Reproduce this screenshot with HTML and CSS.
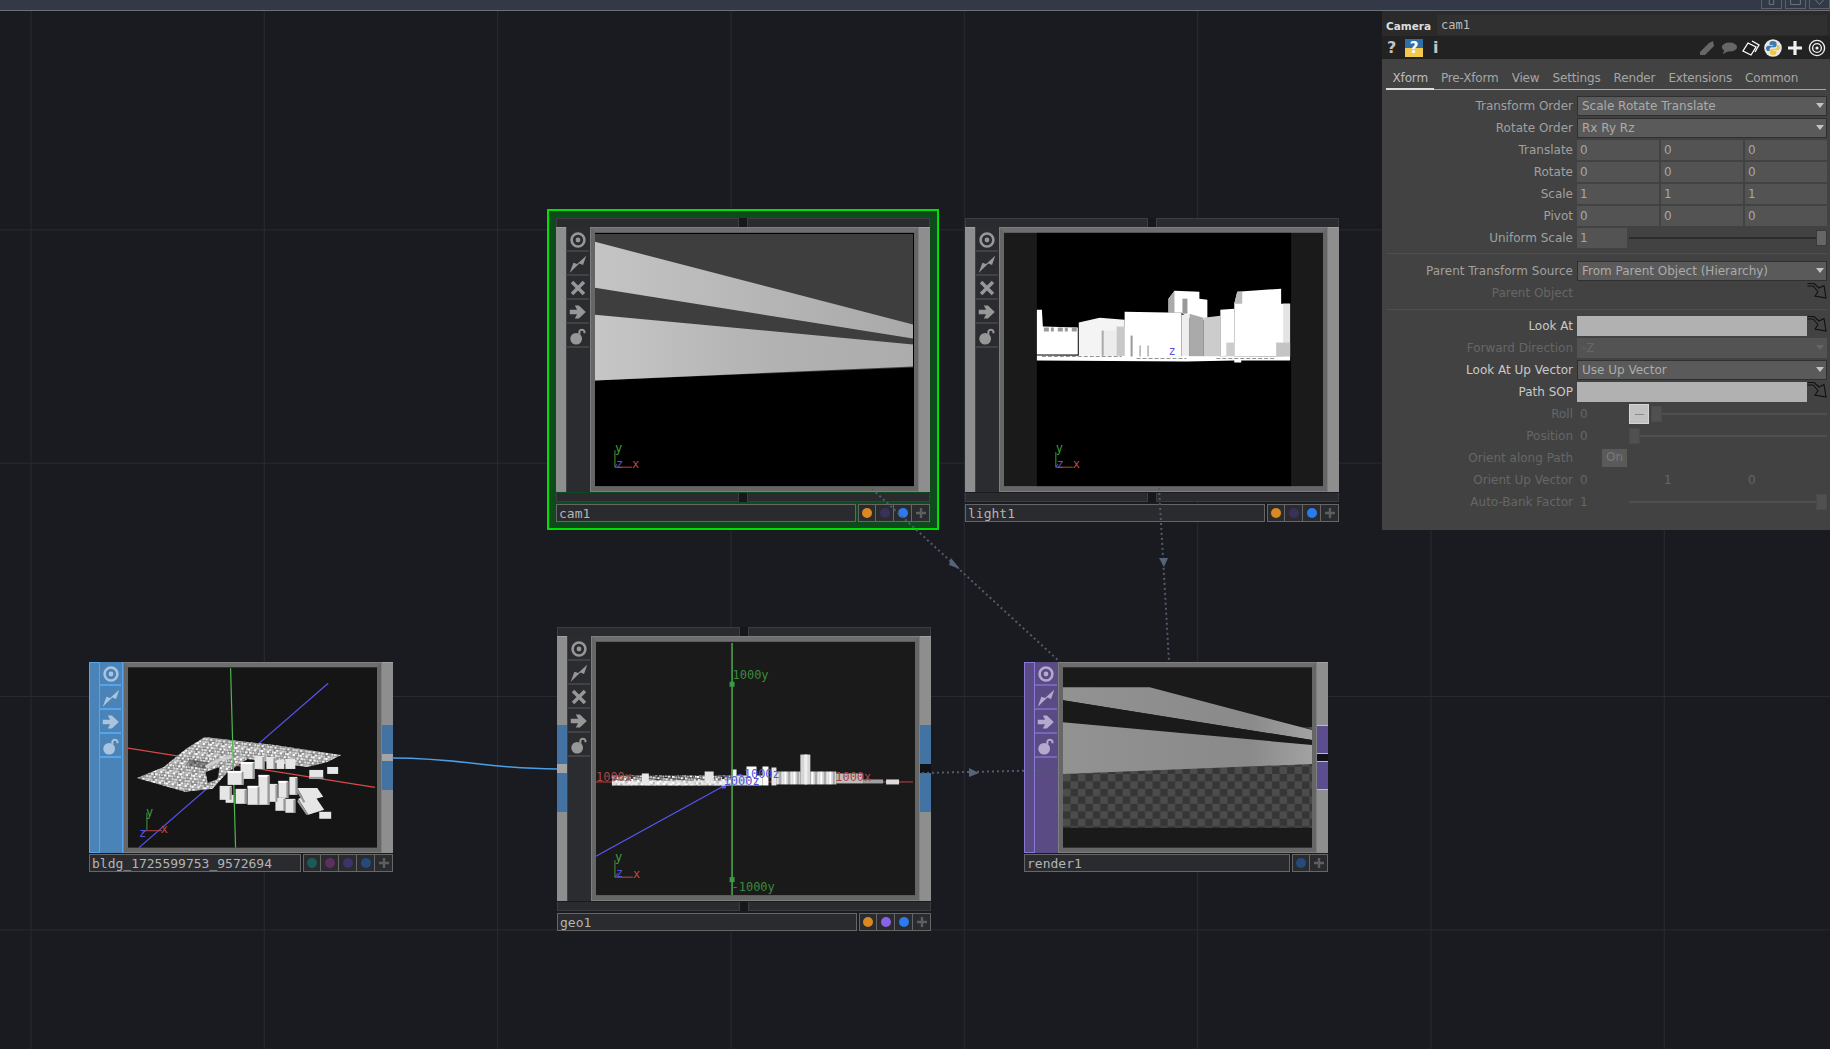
FILE: index.html
```html
<!DOCTYPE html>
<html>
<head>
<title>cam1</title>
<meta charset="utf-8" />
<link rel="stylesheet" href="styles.css">
</head>
<body>

<svg class="defs" width="0" height="0">
  <symbol id="i-target" viewBox="0 0 24 24"><circle cx="12" cy="12" r="7" fill="none" stroke="currentColor" stroke-width="2.8"/><circle cx="12" cy="12" r="2.6" fill="currentColor"/></symbol>
  <symbol id="i-bolt" viewBox="0 0 24 24"><path d="M21 3 L17.5 13 L13.5 11.5 L3 21.5 L7 10.5 L11 12 Z" fill="currentColor"/></symbol>
  <symbol id="i-x" viewBox="0 0 24 24"><path d="M5.5 5.5 L18.5 18.5 M18.5 5.5 L5.5 18.5" fill="none" stroke="currentColor" stroke-width="3.8"/></symbol>
  <symbol id="i-arrow" viewBox="0 0 24 24"><path d="M3 9.5 H11 L8.5 5 H13 L20.5 12 L13 19 H8.5 L11 14.5 H3 Z" fill="currentColor"/></symbol>
  <symbol id="i-lock" viewBox="0 0 24 24"><circle cx="10" cy="15" r="6.4" fill="currentColor"/><path d="M13.5 10 V7 A3 3 0 0 1 19 7 V9" fill="none" stroke="currentColor" stroke-width="2.2"/></symbol>
  <symbol id="i-plus" viewBox="0 0 12 12"><path d="M6 1 V11 M1 6 H11" stroke="currentColor" stroke-width="2.4"/></symbol>
  <symbol id="i-op" viewBox="0 0 20 16"><path d="M0.5 0.5 H7 L12 5 L17 2.5 L19 15 L8 13 L11 8.5 L6 3 H0.5" fill="none" stroke="#111" stroke-width="1.1"/></symbol>
  <pattern id="speck" width="13" height="11" patternUnits="userSpaceOnUse" patternTransform="rotate(7)">
    <rect x="0" y="0" width="2.4" height="2.4" fill="#fff"/><rect x="3" y="0.5" width="1.8" height="2" fill="#ccc"/><rect x="5.5" y="0" width="2.8" height="2.4" fill="#fff"/><rect x="9" y="0.6" width="1.6" height="1.8" fill="#aaa"/><rect x="11" y="0" width="1.8" height="2.4" fill="#eee"/>
    <rect x="1" y="3" width="2.8" height="2.4" fill="#eee"/><rect x="4.5" y="3.4" width="1.8" height="2" fill="#fff"/><rect x="7" y="3" width="2.4" height="2" fill="#bbb"/><rect x="10" y="3.2" width="2.6" height="2.2" fill="#fff"/>
    <rect x="0" y="6" width="1.8" height="2.2" fill="#fff"/><rect x="2.5" y="6.4" width="2.4" height="2" fill="#aaa"/><rect x="5.4" y="6" width="2" height="2.4" fill="#eee"/><rect x="8" y="6" width="2.8" height="2.4" fill="#ddd"/><rect x="11.4" y="6.4" width="1.4" height="1.8" fill="#bbb"/>
    <rect x="1.6" y="9" width="2.8" height="1.8" fill="#fff"/><rect x="5" y="9" width="1.8" height="1.8" fill="#ccc"/><rect x="7.4" y="9.2" width="2.4" height="1.6" fill="#fff"/><rect x="10.4" y="9" width="1.8" height="1.8" fill="#ddd"/>
  </pattern>
  <pattern id="cols" width="9" height="10" patternUnits="userSpaceOnUse">
    <rect width="9" height="10" fill="#cfcfcf"/>
    <rect width="2" height="10" fill="#fff"/><rect x="4" width="1.5" height="10" fill="#9a9a9a"/><rect x="6.5" width="1.5" height="10" fill="#efefef"/>
  </pattern>
  <pattern id="checker" width="15" height="15" patternUnits="userSpaceOnUse" y="2">
    <rect width="15" height="15" fill="#363636"/>
    <rect width="7.5" height="7.5" fill="#4c4c4c"/>
    <rect x="7.5" y="7.5" width="7.5" height="7.5" fill="#4c4c4c"/>
  </pattern>
  <linearGradient id="wall-a" x1="0" x2="1" y1="0" y2="0"><stop offset="0" stop-color="#c4c4c4"/><stop offset="1" stop-color="#a9a9a9"/></linearGradient>
  <linearGradient id="wall-b" x1="0" x2="1" y1="0" y2="0"><stop offset="0" stop-color="#c6c6c6"/><stop offset="0.55" stop-color="#b2b2b2"/><stop offset="1" stop-color="#acacac"/></linearGradient>
  <linearGradient id="wall-c" x1="0" x2="1" y1="0" y2="0"><stop offset="0" stop-color="#929292"/><stop offset="0.75" stop-color="#8a8a8a"/><stop offset="1" stop-color="#a2a2a2"/></linearGradient>
</svg>

<div class="topbar">
  <span class="winbtn"><svg viewBox="0 0 21 9"><path d="M8 0 V5 H13 V0" fill="none" stroke="#777d88"/></svg></span>
  <span class="winbtn"><svg viewBox="0 0 21 9"><path d="M5 5 H16 V0 M5 5 V0" fill="none" stroke="#777d88"/></svg></span>
  <span class="winbtn"><svg viewBox="0 0 21 9"><path d="M6 0 L10.5 5 L15 0" fill="none" stroke="#777d88"/></svg></span>
</div>

<div class="canvas">
  <div class="selection"></div>

  <!-- cam1 -->
  <div class="node big n-cam">
    <div class="strip"><i></i><i></i></div>
    <div class="main">
      <div class="edge"></div>
      <div class="tools">
        <span><svg><use href="#i-target"/></svg></span>
        <span><svg><use href="#i-bolt"/></svg></span>
        <span><svg><use href="#i-x"/></svg></span>
        <span><svg><use href="#i-arrow"/></svg></span>
        <span><svg><use href="#i-lock"/></svg></span>
      </div>
      <div class="view">
        <svg viewBox="0 0 320 254">
          <rect width="320" height="254" fill="#000"/>
          <polygon points="0,1 319,1 319,135 0,148" fill="#3e3e3e"/>
          <polygon points="0,9 319,92 319,106 0,55" fill="url(#wall-a)"/>
          <polygon points="0,82 319,112 319,134 0,148" fill="url(#wall-b)"/>
          <path class="ax-y" d="M20 235 V218"/><path class="ax-x" d="M20 235 H37"/><path class="ax-z" d="M20 235 L22 232"/>
          <text class="t-y" x="20" y="220">y</text><text class="t-x" x="37" y="236">x</text><text class="t-z" x="21" y="236">z</text>
        </svg>
      </div>
      <div class="edge"></div>
    </div>
    <div class="strip under"><i></i><i></i></div>
    <div class="namebar">
      <span class="name">cam1</span>
      <span class="btn"><b class="orange"></b></span><span class="btn"><b class="dim-purple"></b></span><span class="btn"><b class="blue"></b></span><span class="btn"><svg><use href="#i-plus"/></svg></span>
    </div>
  </div>

  <!-- light1 -->
  <div class="node big n-light">
    <div class="strip"><i></i><i></i></div>
    <div class="main">
      <div class="edge"></div>
      <div class="tools">
        <span><svg><use href="#i-target"/></svg></span>
        <span><svg><use href="#i-bolt"/></svg></span>
        <span><svg><use href="#i-x"/></svg></span>
        <span><svg><use href="#i-arrow"/></svg></span>
        <span><svg><use href="#i-lock"/></svg></span>
      </div>
      <div class="view">
        <svg viewBox="-33 0 320 254">
          <rect x="-33" width="320" height="254" fill="#1a1a1a"/>
          <rect width="255" height="254" fill="#000"/>
          <polygon points="0,77 5,77 6,94 41,95 41,122 0,122" fill="#fff"/>
          <path d="M7 97 H41" stroke="#999" stroke-width="4" stroke-dasharray="5 2 3 4"/>
          <polygon points="42,90 63,85 88,87 88,124 42,124" fill="#f4f4f4"/>
          <rect x="65" y="98" width="15" height="26" fill="#ececec"/>
          <rect x="65" y="98" width="2" height="26" fill="#aaa"/>
          <rect x="80" y="94" width="8" height="30" fill="#c8c8c8"/>
          <polygon points="88,79 145,80 145,124 88,124" fill="#fff"/>
          <polygon points="132,66 138,58 163,59 163,66 171,67 171,88 154,86 145,80 132,80" fill="#fff"/>
          <polygon points="132,66 138,58 138,80 132,80" fill="#aaa"/>
          <rect x="146" y="66" width="5" height="15" fill="#999"/>
          <polygon points="153,81 167,85 167,125 153,125" fill="#aaa"/>
          <polygon points="167,85 184,83 184,125 167,125" fill="#ccc"/>
          <rect x="145" y="82" width="8" height="43" fill="#eee"/>
          <polygon points="184,77 198,76 198,124 184,124" fill="#fff"/>
          <rect x="190" y="110" width="8" height="16" fill="#ccc"/>
          <polygon points="198,71 201,59 245,56 245,71 254,71 254,124 198,124" fill="#fff"/>
          <polygon points="198,71 201,59 206,59 206,71" fill="#bbb"/>
          <rect x="247" y="71" width="7" height="53" fill="#e4e4e4"/>
          <rect x="240" y="110" width="14" height="14" fill="#c4c4c4"/>
          <path d="M0 123 L254 124 L254 128 L205 128 L205 130 L198 130 L198 128 L150 129 L0 128 Z" fill="#fff"/>
          <path d="M5 124 H85 M100 126 H150 M180 126 H240" stroke="#777" stroke-width="0.8" stroke-dasharray="4 2"/>
          <rect x="94" y="103" width="2" height="21" fill="#999"/><rect x="103" y="113" width="1" height="11" fill="#888"/><rect x="111" y="113" width="1" height="11" fill="#888"/>
          <text class="t-z" x="132" y="122">z</text>
          <path class="ax-y" d="M19 235 V220"/><path class="ax-x" d="M19 235 H36"/><path class="ax-z" d="M19 235 L21 232"/>
          <text class="t-y" x="19" y="220">y</text><text class="t-x" x="36" y="236">x</text><text class="t-z" x="20" y="236">z</text>
        </svg>
      </div>
      <div class="edge"></div>
    </div>
    <div class="strip under"><i></i><i></i></div>
    <div class="namebar">
      <span class="name">light1</span>
      <span class="btn"><b class="orange"></b></span><span class="btn"><b class="dim-purple"></b></span><span class="btn"><b class="blue"></b></span><span class="btn"><svg><use href="#i-plus"/></svg></span>
    </div>
  </div>

  <!-- geo1 -->
  <div class="node big n-geo">
    <div class="strip"><i></i><i></i></div>
    <div class="main">
      <div class="edge geo-ports">
        <div class="port tall"></div><div class="gap"></div><div class="port tall"></div>
      </div>
      <div class="tools">
        <span><svg><use href="#i-target"/></svg></span>
        <span><svg><use href="#i-bolt"/></svg></span>
        <span><svg><use href="#i-x"/></svg></span>
        <span><svg><use href="#i-arrow"/></svg></span>
        <span><svg><use href="#i-lock"/></svg></span>
      </div>
      <div class="view">
        <svg viewBox="0 0 320 254">
          <rect width="320" height="254" fill="#1a1a1a"/>
          <path d="M0 140.5 H318" stroke="#c84040" stroke-width="1"/>
          <path d="M0 215 L129 144" stroke="#5555ee" stroke-width="1.2"/>
          <polygon points="125,143 131,142 130,147 126,147" fill="#5555ee"/>
          <rect x="16" y="139" width="120" height="5" fill="#ddd"/>
          <rect x="16" y="134" width="120" height="10" fill="url(#speck)"/>
          <rect x="46" y="132" width="7" height="11" fill="#e8e8e8"/>
          <rect x="109" y="130" width="9" height="10" fill="#e4e4e4"/>
          <rect x="136" y="128" width="5" height="16" fill="#f2f2f2"/>
          <rect x="141" y="134" width="10" height="10" fill="#ddd"/>
          <rect x="151" y="125" width="10" height="19" fill="#fff"/>
          <rect x="161" y="134" width="6" height="10" fill="#fff"/>
          <rect x="167" y="125" width="6" height="19" fill="#fff"/>
          <rect x="176" y="126" width="5" height="18" fill="#e6e6e6"/>
          <rect x="181" y="130" width="24" height="13" fill="url(#cols)"/>
          <rect x="205" y="113" width="10" height="30" fill="#d6d6d6"/>
          <rect x="209" y="113" width="3" height="30" fill="#efefef"/>
          <rect x="215" y="130" width="26" height="13" fill="url(#cols)"/>
          <rect x="241" y="132" width="27" height="10" fill="#bdbdbd"/>
          <rect x="268" y="138" width="20" height="4" fill="#a0a0a0"/>
          <rect x="291" y="138" width="13" height="5" fill="#dcdcdc"/>
          <path d="M136.5 1 V254" stroke="#4da04d" stroke-width="1.6"/>
          <rect x="134" y="40" width="5" height="5" fill="#3a9a4a"/>
          <rect x="134" y="236" width="5" height="5" fill="#3a9a4a"/>
          <text class="lab t-y" x="137" y="37">1000y</text>
          <text class="lab t-y" x="136" y="250">-1000y</text>
          <text class="lab t-x" x="0" y="140">1000x</text>
          <text class="lab t-x" x="240" y="140">1000x</text>
          <text class="lab t-z" x="141" y="137">-1000z</text>
          <text class="lab t-z" x="128" y="144">1000z</text>
          <path class="ax-y" d="M19 236 V219"/><path class="ax-x" d="M19 236 H37"/><path class="ax-z" d="M19 236 L22 232"/>
          <text class="t-y" x="19" y="220">y</text><text class="t-x" x="37" y="237">x</text><text class="t-z" x="20" y="236">z</text>
        </svg>
      </div>
      <div class="edge geo-ports">
        <div class="port tall"></div><div class="gap black"></div><div class="port tall"></div>
      </div>
    </div>
    <div class="strip under"><i></i><i></i></div>
    <div class="namebar">
      <span class="name">geo1</span>
      <span class="btn"><b class="orange"></b></span><span class="btn"><b class="purple"></b></span><span class="btn"><b class="blue"></b></span><span class="btn"><svg><use href="#i-plus"/></svg></span>
    </div>
  </div>

  <!-- bldg -->
  <div class="node small tint-blue n-bldg">
    <div class="main">
      <div class="edge tinted"></div>
      <div class="tools tinted">
        <span><svg><use href="#i-target"/></svg></span>
        <span><svg><use href="#i-bolt"/></svg></span>
        <span><svg><use href="#i-arrow"/></svg></span>
        <span><svg><use href="#i-lock"/></svg></span>
      </div>
      <div class="view">
        <svg viewBox="0 0 250 181">
          <rect width="250" height="181" fill="#151515"/>
          <path d="M0 81 L248 120.5" stroke="#d84a4a" stroke-width="1.2"/>
          <path d="M11 181 L201 16" stroke="#5555ee" stroke-width="1.2"/>
          <polygon points="77,70 147,78 214,88 200,95 180,100 150,96 120,92 100,105 85,122 57,125 9,111 36,100 58,82" fill="#777"/>
          <polygon points="77,70 147,78 214,88 200,95 180,100 150,96 120,92 100,105 85,122 57,125 9,111 36,100 58,82" fill="url(#speck)"/>
          <polygon points="62,92 84,96 78,102 58,98" fill="#151515" fill-opacity="0.4"/>
          <polygon points="78,105 92,100 90,112 80,116" fill="#151515"/>
          <path d="M78 100 Q 90 92 104 90" fill="none" stroke="#cfcfcf" stroke-width="3"/>
          <path d="M103 1 L108 181" stroke="#4db84d" stroke-width="1.2"/>
          <g fill="#e6e6e6">
            <rect x="100" y="104" width="16" height="14"/>
            <rect x="113" y="95" width="14" height="17"/>
            <rect x="92" y="119" width="12" height="14"/>
            <rect x="98" y="128" width="8" height="8"/>
            <rect x="108" y="122" width="11" height="15"/>
            <rect x="120" y="119" width="12" height="19"/>
            <rect x="131" y="108" width="11" height="30"/>
            <rect x="142" y="117" width="8" height="18"/>
            <rect x="148" y="131" width="10" height="13"/>
            <rect x="158" y="132" width="10" height="14"/>
            <rect x="151" y="114" width="10" height="17"/>
            <rect x="162" y="110" width="8" height="18"/>
            <rect x="192" y="145" width="12" height="7"/>
            <rect x="182" y="103" width="14" height="9"/>
            <rect x="200" y="100" width="11" height="7"/>
            <rect x="127" y="89" width="10" height="13"/>
            <rect x="139" y="90" width="9" height="12"/>
            <rect x="149" y="93" width="8" height="9"/>
            <rect x="158" y="92" width="10" height="10"/>
            <polygon points="170,121 190,121 196,130 178,135"/>
            <polygon points="171,132 186,127 197,143 181,148"/>
          </g>
          <g fill="#9a9a9a">
            <rect x="114" y="105" width="2" height="13"/><rect x="125" y="96" width="2" height="16"/><rect x="102" y="120" width="2" height="13"/>
            <rect x="117" y="123" width="2" height="14"/><rect x="130" y="120" width="2" height="18"/><rect x="140" y="109" width="2" height="29"/>
            <rect x="148" y="118" width="2" height="17"/><rect x="156" y="132" width="2" height="12"/><rect x="166" y="133" width="2" height="13"/>
            <rect x="159" y="115" width="2" height="16"/><rect x="168" y="111" width="2" height="17"/><rect x="182" y="110" width="14" height="2"/>
            <rect x="135" y="90" width="2" height="12"/><rect x="146" y="91" width="2" height="11"/>
            <polygon points="170,121 178,135 176,136 169,124"/>
            <polygon points="171,132 181,148 179,148 170,135"/>
          </g>
          <g fill="#fff">
            <rect x="100" y="104" width="14" height="2"/><rect x="113" y="95" width="12" height="2"/><rect x="120" y="119" width="10" height="2"/><rect x="131" y="108" width="9" height="2"/><rect x="151" y="114" width="8" height="2"/>
          </g>
          <path class="ax-y" d="M19 163 V146"/><path class="ax-x" d="M14 164 H34"/><path class="ax-z" d="M19 163 L14 167"/>
          <text class="t-y" x="18" y="149">y</text><text class="t-x" x="33" y="166">x</text><text class="t-z" x="11" y="170">z</text>
        </svg>
      </div>
      <div class="edge bldg-ports">
        <div class="port"></div><div class="gap"></div><div class="port"></div>
      </div>
    </div>
    <div class="namebar">
      <span class="name">bldg_1725599753_9572694</span>
      <span class="btn"><b class="dim-teal"></b></span><span class="btn"><b class="dim-magenta"></b></span><span class="btn"><b class="dim-violet"></b></span><span class="btn"><b class="dim-blue"></b></span><span class="btn"><svg><use href="#i-plus"/></svg></span>
    </div>
  </div>

  <!-- render1 -->
  <div class="node small tint-purple n-render">
    <div class="main">
      <div class="edge tinted"></div>
      <div class="tools tinted">
        <span><svg><use href="#i-target"/></svg></span>
        <span><svg><use href="#i-bolt"/></svg></span>
        <span><svg><use href="#i-arrow"/></svg></span>
        <span><svg><use href="#i-lock"/></svg></span>
      </div>
      <div class="view">
        <svg viewBox="0 0 250 181">
          <rect width="250" height="181" fill="#1a1a1a"/>
          <polygon points="0,60 250,60 250,161 0,161" fill="url(#checker)"/>
          <polygon points="0,20 87,20 250,63 250,78 0,78" fill="#1a1a1a"/>
          <polygon points="0,20 87,20 250,63 250,73 0,33" fill="url(#wall-c)"/>
          <polygon points="0,33 250,73 250,78 0,55" fill="#1a1a1a"/>
          <polygon points="0,55 250,78 250,97 0,107" fill="url(#wall-c)"/>
        </svg>
      </div>
      <div class="edge bldg-ports">
        <div class="port lined"></div><div class="gap black"></div><div class="port lined"></div>
      </div>
    </div>
    <div class="namebar">
      <span class="name">render1</span>
      <span class="btn"><b class="dim-blue"></b></span><span class="btn"><svg><use href="#i-plus"/></svg></span>
    </div>
  </div>

  <svg class="wires" viewBox="0 0 1830 1049">
    <path class="wire" d="M392 758 C 465 758, 485 769, 557 769"/>
    <path class="dots" d="M872 489 L1060 662"/>
    <path class="dots" d="M1159 488 L1169 662"/>
    <path class="dots" d="M922 773 L1058 770"/>
    <polygon class="arrowhead" points="951,558 960,569 949,565"/>
    <polygon class="arrowhead" points="1159,558 1168,558 1164,567"/>
    <polygon class="arrowhead" points="969,768 979,773 969,777"/>
  </svg>
</div>

<div class="panel">
  <div class="title">
    <b>Camera</b>
    <span class="opname">cam1</span>
  </div>
  <div class="iconbar">
    <span class="q">?</span>
    <span class="helpbox">?</span>
    <span class="info">i</span>
    <span class="spacer"></span>
    <svg class="pi" viewBox="0 0 18 18"><path d="M2 13 L11 4 L15 2 L16 7 L7 16 L2 16 Z" fill="#666"/></svg>
    <svg class="pi" viewBox="0 0 20 18"><ellipse cx="10.5" cy="8" rx="8.5" ry="5" fill="#666"/><path d="M5 11 L3 16 L10 12 Z" fill="#666"/></svg>
    <svg class="pi" viewBox="0 0 18 18"><path d="M6 4 L14 8 L9 16 L1 12 Z" fill="#1e1e1e" stroke="#fff" stroke-width="1.3"/><path d="M10 2 L17 6 L13 13" fill="none" stroke="#fff" stroke-width="1.3"/></svg>
    <svg class="pi wide" viewBox="0 0 18 18">
      <circle cx="9" cy="9" r="8.8" fill="#e8e8e8"/>
      <path d="M9 2 C6 2 5.6 3.2 5.6 4.6 V6 H9.2 V6.8 H4.4 C3 6.8 2 8 2 9.4 C2 10.8 3 12 4.2 12 H5.6 V10.4 C5.6 9 6.6 8.2 8 8.2 H10.6 C11.8 8.2 12.6 7.4 12.6 6.2 V4.4 C12.6 3 11.4 2 9 2 Z" fill="#3a7ab5"/>
      <path d="M9 16 C12 16 12.4 14.8 12.4 13.4 V12 H8.8 V11.2 H13.6 C15 11.2 16 10 16 8.6 C16 7.2 15 6 13.8 6 H13 V7.6 C13 9 12 9.8 10.6 9.8 H8 C6.8 9.8 6 10.6 6 11.8 V13.6 C6 15 6.8 16 9 16 Z" fill="#f0c93c"/>
    </svg>
    <svg class="pi" viewBox="0 0 18 18"><path d="M9 2 V16 M2 9 H16" stroke="#f0f0f0" stroke-width="3.2"/></svg>
    <svg class="pi" viewBox="0 0 18 18"><circle cx="9" cy="9" r="7.6" fill="none" stroke="#eee" stroke-width="1.4"/><circle cx="9" cy="9" r="4.4" fill="none" stroke="#eee" stroke-width="1.4"/><circle cx="9" cy="9" r="1.6" fill="#eee"/></svg>
  </div>

  <div class="tabs">
    <span class="tab active">Xform</span>
    <span class="tab">Pre-Xform</span>
    <span class="tab">View</span>
    <span class="tab">Settings</span>
    <span class="tab">Render</span>
    <span class="tab">Extensions</span>
    <span class="tab">Common</span>
  </div>

  <div class="params">
    <div class="row"><label>Transform Order</label><div class="menu">Scale Rotate Translate</div></div>
    <div class="row"><label>Rotate Order</label><div class="menu">Rx Ry Rz</div></div>
    <div class="row"><label>Translate</label><div class="triple"><span class="field">0</span><span class="field">0</span><span class="field">0</span></div></div>
    <div class="row"><label>Rotate</label><div class="triple"><span class="field">0</span><span class="field">0</span><span class="field">0</span></div></div>
    <div class="row"><label>Scale</label><div class="triple"><span class="field">1</span><span class="field">1</span><span class="field">1</span></div></div>
    <div class="row"><label>Pivot</label><div class="triple"><span class="field">0</span><span class="field">0</span><span class="field">0</span></div></div>
    <div class="row"><label>Uniform Scale</label>
      <div class="withslider"><span class="field short">1</span><div class="slider end strong"><i></i></div></div>
    </div>
    <hr class="sep first">
    <div class="row"><label>Parent Transform Source</label><div class="menu">From Parent Object (Hierarchy)</div></div>
    <div class="row off"><label>Parent Object</label><div class="oppick"><svg><use href="#i-op"/></svg></div></div>
    <hr class="sep second">
    <div class="row on"><label>Look At</label><div class="oppick"><span class="path"></span><svg><use href="#i-op"/></svg></div></div>
    <div class="row off"><label>Forward Direction</label><div class="menu flat">-Z</div></div>
    <div class="row on"><label>Look At Up Vector</label><div class="menu">Use Up Vector</div></div>
    <div class="row on"><label>Path SOP</label><div class="oppick"><span class="path"></span><svg><use href="#i-op"/></svg></div></div>
    <div class="row off"><label>Roll</label>
      <div class="withslider"><span class="val short">0</span><span class="dash"><i></i></span><div class="slider"><i></i></div></div>
    </div>
    <div class="row off"><label>Position</label>
      <div class="withslider"><span class="val short">0</span><div class="slider"><i></i></div></div>
    </div>
    <div class="row off"><label>Orient along Path</label><div class="toggle-wrap"><span class="toggle">On</span></div></div>
    <div class="row off"><label>Orient Up Vector</label><div class="triple"><span class="val">0</span><span class="val">1</span><span class="val">0</span></div></div>
    <div class="row off"><label>Auto-Bank Factor</label>
      <div class="withslider"><span class="val short">1</span><div class="slider end"><i></i></div></div>
    </div>
  </div>
</div>

</body>
</html>
```

FILE: styles.css
```css
* {
  box-sizing: border-box;
}

html, body {
  margin: 0;
  padding: 0;
  height: 100%;
  overflow: hidden;
}

body {
  position: relative;
  background: #191b21;
  font-family: "DejaVu Sans", sans-serif;
  color: #aaa;
}

.defs {
  position: absolute;
}

/* top strip */
.topbar {
  height: 11px;
  background: #333946;
  border-bottom: 1px solid #6d7079;
  display: flex;
  justify-content: flex-end;
  gap: 3px;
  overflow: hidden;
}

.winbtn {
  width: 21px;
  height: 9px;
  border: 1px solid #5b606b;
  border-top: 0;
}

.winbtn svg {
  display: block;
  width: 19px;
  height: 8px;
}

/* node canvas */
.canvas {
  position: absolute;
  left: 0;
  top: 11px;
  width: 1830px;
  height: 1038px;
  background-image:
    linear-gradient(#272a32 1px, transparent 1px),
    linear-gradient(90deg, #272a32 1px, transparent 1px);
  background-size: 233.33px 233.33px;
  background-position: 30.5px -15px;
}

.selection {
  position: absolute;
  left: 547px;
  top: 198px;
  width: 392px;
  height: 321px;
  border: 2px solid #00e000;
  background: #0f4a1c;
}

.wires {
  position: absolute;
  left: 0;
  top: -11px;
  width: 1830px;
  height: 1049px;
  pointer-events: none;
}

.wire {
  fill: none;
  stroke: #4a9fe6;
  stroke-width: 1.5;
}

.dots {
  fill: none;
  stroke: #505c6e;
  stroke-width: 2;
  stroke-dasharray: 2 3;
}

.arrowhead {
  fill: #566479;
}

.node {
  position: absolute;
  display: flex;
  flex-direction: column;
}

.node.big {
  width: 374px;
  height: 304px;
}

.node.small {
  width: 304px;
  height: 210px;
}

.n-cam { left: 556px; top: 207px; }
.n-light { left: 965px; top: 207px; }
.n-geo { left: 557px; top: 616px; }
.n-bldg { left: 89px; top: 651px; }
.n-render { left: 1024px; top: 651px; }

.strip {
  height: 9px;
  display: flex;
  gap: 8px;
  flex: none;
  background: #15171b;
}

.strip i {
  flex: 1;
  background: #2a2b2f;
  border: 1px solid #3c3d41;
  border-bottom-width: 0;
}

.strip.under {
  margin-top: 1px;
}

.strip.under i {
  border-top-width: 0;
  border-bottom-width: 1px;
}

.big .main {
  height: 265px;
}

.small .main {
  height: 191px;
}

.main {
  display: grid;
  grid-template-columns: 10px 24px 1fr 11px;
  flex: none;
  background: #2b2c2f;
}

.edge {
  background: #8e8e8e;
  border-top: 1px solid #a0a0a0;
  display: flex;
  flex-direction: column;
}

.edge .port {
  background: #4373a3;
  height: 29px;
}

.edge .port.tall {
  height: 39px;
}

.edge .gap {
  height: 7px;
}

.geo-ports {
  padding-top: 88px;
}

.geo-ports .gap {
  height: 9px;
  background: #a4a4a4;
}

.bldg-ports {
  padding-top: 62px;
}

.bldg-ports .gap {
  background: #a4a4a4;
}

.edge .gap.black {
  background: #111216;
}

.tint-purple .port {
  background: #5c4d8e;
}

.port.lined {
  border: 1px solid #bdbdbd;
  border-left: 0;
  border-right: 0;
}

.tools {
  display: flex;
  flex-direction: column;
  color: #979797;
  background: #2b2c2f;
  border-left: 1px solid #414246;
  padding-right: 1px;
}

.big .tools {
  padding-top: 1px;
}

.tools span {
  height: 24px;
  display: flex;
  align-items: center;
  justify-content: center;
  border-bottom: 2px solid #414246;
  padding-top: 2px;
  flex: none;
}

.tools svg {
  width: 22px;
  height: 22px;
  flex: none;
}

.tint-blue .edge.tinted {
  background: #4a83b8;
  border: 1px solid #58a4ea;
  border-right: 0;
}

.tint-blue .tools.tinted {
  background: #4a83b8;
  color: #a9c4dc;
  border-left: 1px solid #58a4ea;
  border-right: 1px solid #58a4ea;
}

.tint-blue .tools span {
  border-bottom-color: #58a4ea;
}

.tint-purple .edge.tinted {
  background: #5a4b85;
  border: 1px solid #8a78d8;
  border-right: 0;
}

.tint-purple .tools.tinted {
  background: #5a4b85;
  color: #b3aace;
  border-left: 1px solid #8a78d8;
}

.tint-purple .tools span {
  border-bottom-color: #7766bb;
}

.view {
  background: #666;
  border: 5px solid #666;
  border-top-color: #6e6e6e;
  outline: 1px solid #7e7e7e;
  outline-offset: -1px;
  min-width: 0;
  min-height: 0;
}

.view svg {
  display: block;
  width: 100%;
  height: 100%;
}

.view text {
  font-family: "DejaVu Sans Mono", monospace;
  font-size: 12px;
}

.t-y { fill: #3f9a3f; }
.t-x { fill: #c04646; }
.t-z { fill: #5454e0; }

.lab.t-y { fill: #3a8a3a; }
.lab.t-x { fill: #a84444; }

.ax-y, .ax-x, .ax-z {
  fill: none;
  stroke-width: 1;
}

.ax-y { stroke: #3f9a3f; }
.ax-x { stroke: #c04646; }
.ax-z { stroke: #5454e0; }

.namebar {
  margin-top: 2px;
  height: 18px;
  display: flex;
  flex: none;
}

.small .namebar {
  margin-top: 1px;
}

.name {
  flex: 1;
  background: #2a2b2f;
  border: 1px solid #666;
  margin-right: 2px;
  padding-left: 2px;
  font: 13px/17px "DejaVu Sans Mono", monospace;
  color: #b4b4b4;
  white-space: nowrap;
  overflow: hidden;
}

.btn {
  width: 18px;
  flex: none;
  background: #2a2b2f;
  border: 1px solid #666;
  border-left-width: 0;
  display: flex;
  align-items: center;
  justify-content: center;
  color: #5e5e5e;
}

.name + .btn {
  border-left-width: 1px;
}

.btn svg {
  width: 12px;
  height: 12px;
}

.btn b {
  width: 10px;
  height: 10px;
  border-radius: 50%;
  display: block;
}

.orange { background: #d9891f; }
.blue { background: #2b7bee; }
.purple { background: #8a62e8; }
.dim-purple { background: #3a3158; }
.dim-teal { background: #1e5a55; }
.dim-magenta { background: #5b2f5f; }
.dim-violet { background: #3c3468; }
.dim-blue { background: #264a7c; }

/* parameter panel */
.panel {
  position: absolute;
  left: 1382px;
  top: 11px;
  width: 448px;
  height: 519px;
  background: #424242;
  font-size: 12px;
  display: flex;
  flex-direction: column;
}

.title {
  height: 25px;
  background: #2a2a2a;
  display: flex;
  align-items: center;
  padding: 4px 3px 1px 4px;
  flex: none;
}

.title b {
  width: 51px;
  padding-top: 1px;
  font-size: 10.5px;
  color: #ddd;
  flex: none;
}

.opname {
  flex: 1;
  height: 20px;
  background: #303030;
  padding-left: 4px;
  font: 12px/21px "DejaVu Sans Mono", monospace;
  color: #bdbdbd;
}

.iconbar {
  height: 23px;
  background: #222;
  display: flex;
  align-items: center;
  padding: 0 4px 0 5px;
  flex: none;
}

.q {
  width: 18px;
  font-size: 16px;
  font-weight: bold;
  color: #c4c4c4;
}

.helpbox {
  width: 18px;
  height: 18px;
  background: linear-gradient(#2f6ea8 50%, #f2c94c 50%);
  color: #fff;
  font-size: 15px;
  font-weight: bold;
  line-height: 18px;
  text-align: center;
}

.info {
  margin-left: 10px;
  font-size: 16px;
  font-weight: bold;
  color: #c4c4c4;
}

.spacer {
  flex: 1;
}

.pi {
  width: 18px;
  height: 18px;
  margin-left: 4px;
}

/* tabs */
.tabs {
  height: 31px;
  margin: 0 4px;
  padding-top: 12px;
  display: flex;
  border-bottom: 1px solid #a8a8a8;
  flex: none;
}

.tab {
  padding: 0 6.5px;
  line-height: 15px;
  color: #a6a6a6;
  font-size: 12px;
  letter-spacing: -0.15px;
}

.tab.active {
  color: #bcbcbc;
  border-bottom: 2px solid #ddd;
  height: 19px;
}

.params {
  padding: 6px 3px 0 4px;
  display: flex;
  flex-direction: column;
  gap: 2px;
  font-size: 12px;
}

.row {
  height: 20px;
  display: grid;
  grid-template-columns: 187px 250px;
  column-gap: 4px;
  align-items: center;
  line-height: 18px;
  flex: none;
}

.row label {
  text-align: right;
  color: #a0a0a0;
  white-space: nowrap;
}

.row.on label {
  color: #c9c9c9;
}

.row.off label,
.row.off .val {
  color: #666;
}

.row.off .toggle {
  color: #7a7a7a;
}

.menu {
  height: 20px;
  background: #5a5a5a;
  border: 1px solid #2f2f2f;
  padding-left: 4px;
  color: #ababab;
  position: relative;
}

.menu::after {
  content: "";
  position: absolute;
  right: 2px;
  top: 6px;
  border-left: 4px solid transparent;
  border-right: 4px solid transparent;
  border-top: 5px solid #c4c4c4;
}

.menu.flat {
  background: #535353;
  border-color: #535353;
  color: #666;
}

.menu.flat::after {
  border-top-color: #666;
}

.triple {
  display: grid;
  grid-template-columns: repeat(3, 82px);
  column-gap: 2px;
}

.field {
  height: 20px;
  background: #535353;
  padding-left: 3px;
  color: #a6a6a6;
  line-height: 20px;
  display: block;
}

.val {
  padding-left: 3px;
  display: block;
}

.short {
  width: 50px;
  flex: none;
}

.withslider {
  display: flex;
  align-items: center;
  height: 20px;
}

.slider {
  flex: 1;
  margin-left: 2px;
  height: 16px;
  display: flex;
  background: linear-gradient(#4f4f4f, #4f4f4f) center / 100% 2px no-repeat;
}

.slider i {
  width: 11px;
  height: 16px;
  background: #505050;
  border: 1px solid #4a4a4a;
  display: block;
}

.slider.end {
  justify-content: flex-end;
}

.slider.strong {
  background-image: linear-gradient(#2c2c2c, #2c2c2c);
}

.slider.strong i {
  background: #666;
  border-color: #3a3a3a;
}

.dash {
  width: 20px;
  height: 20px;
  margin-left: 2px;
  background: #c2c2c2;
  border: 1px solid #d6d6d6;
  flex: none;
  display: flex;
  align-items: center;
  justify-content: center;
}

.dash i {
  width: 9px;
  height: 1px;
  background: #8a8a8a;
}

.oppick {
  display: flex;
  justify-content: flex-end;
  height: 20px;
}

.path {
  flex: 1;
  background: #b1b1b1;
}

.oppick svg {
  width: 20px;
  height: 16px;
  flex: none;
}

.toggle-wrap {
  height: 20px;
  padding-left: 25px;
}

.toggle {
  display: block;
  width: 25px;
  height: 18px;
  margin-top: 1px;
  background: #5a5a5a;
  text-align: center;
  line-height: 17px;
}

.sep {
  margin: 3px 0 5px;
  width: 100%;
  height: 1px;
  border: 0;
  background: #4e4e4e;
  flex: none;
}

.sep.second {
  margin: 4px 0;
}
```
